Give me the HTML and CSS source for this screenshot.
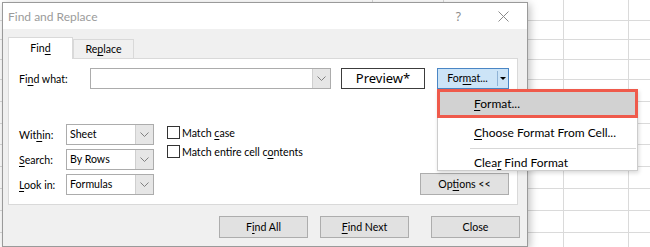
FILE: index.html
```html
<!DOCTYPE html>
<html lang="en">
<head>
  <meta charset="UTF-8">
  <title>Find and Replace</title>
  <link rel="stylesheet" href="styles.css">
</head>
<body>
  <div class="sheet">
    <div class="row r1"></div>
    <div class="row r2"></div>
    <div class="row"></div>
    <div class="row"></div>
    <div class="row tall"></div>
    <div class="row tall"></div>
    <div class="row mid"></div>
    <div class="row tall"></div>
    <div class="row tall"></div>
    <div class="row tall"></div>
    <div class="row tall"></div>
    <div class="row tall"></div>
  </div>

  <div class="dialog">
    <div class="titlebar">
      <span class="title">Find and Replace</span>
      <span class="help">?</span>
      <span class="close-x">
        <svg width="11" height="11" viewBox="0 0 11 11"><path d="M0.5 0.5 L10.5 10.5 M10.5 0.5 L0.5 10.5" stroke="#8a8a8a" stroke-width="1" fill="none"/></svg>
      </span>
    </div>

    <div class="tabs">
      <div class="tab active">Fin<u>d</u></div>
      <div class="tab">Re<u>p</u>lace</div>
    </div>

    <div class="panel">
      <div class="find-row">
        <span class="find-label">Fi<u>n</u>d what:</span>
        <div class="combo find-combo">
          <span class="combo-text"></span>
          <span class="drop"><svg width="9" height="5" viewBox="0 0 9 5"><path d="M0.5 0.5 L4.5 4.5 L8.5 0.5" stroke="#808080" fill="none"/></svg></span>
        </div>
        <div class="preview">Preview*</div>
        <div class="format-btn">
          <span class="format-main">For<u>m</u>at...</span>
          <span class="format-arrow"></span>
        </div>
      </div>

      <div class="options-area">
        <div class="selects">
          <div class="sel-row">
            <span class="sel-label">Wit<u>h</u>in:</span>
            <div class="combo sel-combo">
              <span class="combo-text">Sheet</span>
              <span class="drop"><svg width="9" height="5" viewBox="0 0 9 5"><path d="M0.5 0.5 L4.5 4.5 L8.5 0.5" stroke="#808080" fill="none"/></svg></span>
            </div>
          </div>
          <div class="sel-row">
            <span class="sel-label"><u>S</u>earch:</span>
            <div class="combo sel-combo">
              <span class="combo-text">By Rows</span>
              <span class="drop"><svg width="9" height="5" viewBox="0 0 9 5"><path d="M0.5 0.5 L4.5 4.5 L8.5 0.5" stroke="#808080" fill="none"/></svg></span>
            </div>
          </div>
          <div class="sel-row">
            <span class="sel-label"><u>L</u>ook in:</span>
            <div class="combo sel-combo">
              <span class="combo-text">Formulas</span>
              <span class="drop"><svg width="9" height="5" viewBox="0 0 9 5"><path d="M0.5 0.5 L4.5 4.5 L8.5 0.5" stroke="#808080" fill="none"/></svg></span>
            </div>
          </div>
        </div>

        <div class="checks">
          <div class="check-row"><span class="box"></span><span>Match <u>c</u>ase</span></div>
          <div class="check-row"><span class="box"></span><span>Match entire cell c<u>o</u>ntents</span></div>
        </div>

        <button class="btn options">Op<u>t</u>ions &lt;&lt;</button>
      </div>
    </div>

    <div class="actions">
      <button class="btn">F<u>i</u>nd All</button>
      <button class="btn next"><u>F</u>ind Next</button>
      <button class="btn close">Close</button>
    </div>
  </div>

  <div class="menu">
    <div class="menu-item selected"><u>F</u>ormat...</div>
    <div class="menu-item"><u>C</u>hoose Format From Cell...</div>
    <div class="menu-sep"></div>
    <div class="menu-item">Clea<u>r</u> Find Format</div>
  </div>
</body>
</html>
```

FILE: styles.css
```css
body {
  margin: 0;
  width: 650px;
  height: 247px;
  position: relative;
  overflow: hidden;
  font-family: Lato, 'Noto Sans', sans-serif;
  font-size: 10.6px;
  color: #000;
  background: #fff;
}
u {
  text-decoration-thickness: 1px;
  text-underline-offset: 2px;
}

/* spreadsheet behind the dialog */
.sheet {
  height: 247px;
  background:
    linear-gradient(#dadada, #dadada) 372px 0 / 1px 100% no-repeat,
    linear-gradient(#dadada, #dadada) 443px 0 / 1px 100% no-repeat,
    linear-gradient(#dadada, #dadada) 563px 0 / 1px 100% no-repeat,
    linear-gradient(#dadada, #dadada) 628px 0 / 1px 100% no-repeat;
}
.row {
  box-sizing: border-box;
  height: 20px;
  border-bottom: 1px solid #dadada;
}
.row.r1 {
  height: 21px;
}
.row.r2 {
  height: 19px;
}
.row.tall {
  height: 22px;
}
.row.mid {
  height: 21px;
}

/* dialog window */
.dialog {
  position: absolute;
  left: 2px;
  top: 2px;
  width: 526px;
  height: 245px;
  box-sizing: border-box;
  border: 1px solid #9a9a9a;
  background: #f0f0f0;
  box-shadow: 2px 2px 8px rgba(0, 0, 0, 0.25);
}
.titlebar {
  height: 26px;
  background: #fff;
  display: flex;
  align-items: center;
  padding-left: 5px;
}
.title {
  font-size: 12px;
  color: #9b9b9b;
  flex: 1;
}
.help {
  font-family: 'Noto Sans', sans-serif;
  font-size: 12px;
  color: #8a8a8a;
  margin-right: 37px;
}
.close-x {
  display: flex;
  margin-right: 18px;
}

.tabs {
  display: flex;
  align-items: flex-end;
  margin: 8px 0 0 5px;
  height: 21px;
}
.tab {
  box-sizing: border-box;
  height: 19px;
  width: 61px;
  border: 1px solid #d9d9d9;
  border-bottom: none;
  background: #f0f0f0;
  text-align: center;
  line-height: 19px;
}
.tab.active {
  width: 65px;
  height: 22px;
  margin-bottom: -1px;
  background: #fff;
  line-height: 21px;
  position: relative;
  z-index: 1;
}

.panel {
  box-sizing: border-box;
  margin-left: 5px;
  width: 510px;
  height: 147px;
  border: 1px solid #d9d9d9;
  background: #fff;
  padding: 9px 8px 9px 10px;
}
.find-row {
  display: flex;
  align-items: center;
  height: 21px;
}
.find-label {
  width: 71px;
}
.combo {
  box-sizing: border-box;
  height: 21px;
  border: 1px solid #acacac;
  display: flex;
  background: #fff;
}
.combo-text {
  flex: 1;
  padding-left: 3px;
  line-height: 19px;
}
.drop {
  width: 17px;
  background: #e6e6e6;
  border-left: 1px solid #cfcfcf;
  display: flex;
  align-items: center;
  justify-content: center;
}
.find-combo {
  width: 241px;
}
.preview {
  box-sizing: border-box;
  margin-left: 10px;
  width: 84px;
  height: 21px;
  border: 1px solid #3c3c3c;
  text-align: center;
  line-height: 19px;
  font-family: 'Noto Sans', sans-serif;
  font-size: 13px;
}
.format-btn {
  box-sizing: border-box;
  margin-left: 12px;
  width: 72px;
  height: 21px;
  border: 1px solid #4a86c5;
  background: #cce4f7;
  display: flex;
  align-items: center;
}
.format-main {
  flex: 1;
  text-align: center;
  border-right: 1px solid #8fb3d6;
  line-height: 15px;
}
.format-arrow {
  width: 10px;
  display: flex;
  justify-content: center;
}
.format-arrow::before {
  content: "";
  border-left: 3px solid transparent;
  border-right: 3px solid transparent;
  border-top: 3px solid #000;
}

.options-area {
  display: flex;
  margin-top: 35px;
  height: 71px;
}
.selects {
  display: flex;
  flex-direction: column;
  gap: 4px;
}
.sel-row {
  display: flex;
  align-items: center;
}
.sel-label {
  width: 47px;
}
.sel-combo {
  width: 88px;
}
.checks {
  margin-left: 13px;
  padding-top: 2px;
  display: flex;
  flex-direction: column;
  gap: 6px;
}
.check-row {
  display: flex;
  align-items: center;
  height: 13px;
}
.box {
  box-sizing: border-box;
  width: 13px;
  height: 13px;
  border: 1px solid #333;
  margin-right: 2px;
}

.btn {
  box-sizing: border-box;
  width: 89px;
  height: 22px;
  border: 1px solid #adadad;
  background: #e1e1e1;
  font-family: inherit;
  font-size: 10.6px;
  color: #000;
  padding: 0;
}
.options {
  margin-left: auto;
  align-self: flex-end;
}

.actions {
  display: flex;
  justify-content: flex-end;
  margin-top: 11px;
  padding-right: 7px;
}
.actions .next {
  margin-left: 12px;
}
.actions .close {
  margin-left: 22px;
}

/* dropdown menu from the Format button */
.menu {
  position: absolute;
  left: 437px;
  top: 89px;
  width: 201px;
  height: 82px;
  box-sizing: border-box;
  background: #fff;
  border: 1px solid #cccccc;
  box-shadow: 1px 2px 4px rgba(0, 0, 0, 0.15);
  font-size: 12px;
}
.menu-item {
  height: 30px;
  line-height: 30px;
  padding-left: 36px;
}
.menu-item.selected {
  margin: -1px -1px 0;
  height: 29px;
  box-sizing: border-box;
  border: 3px solid #ef5a4b;
  background: #d2d2d2;
  line-height: 23px;
  padding-left: 34px;
}
.menu-sep {
  height: 1px;
  background: #d7d7d7;
  margin: 0 1px 0 32px;
}
.menu-sep + .menu-item {
  height: 21px;
  line-height: 28px;
}
```
